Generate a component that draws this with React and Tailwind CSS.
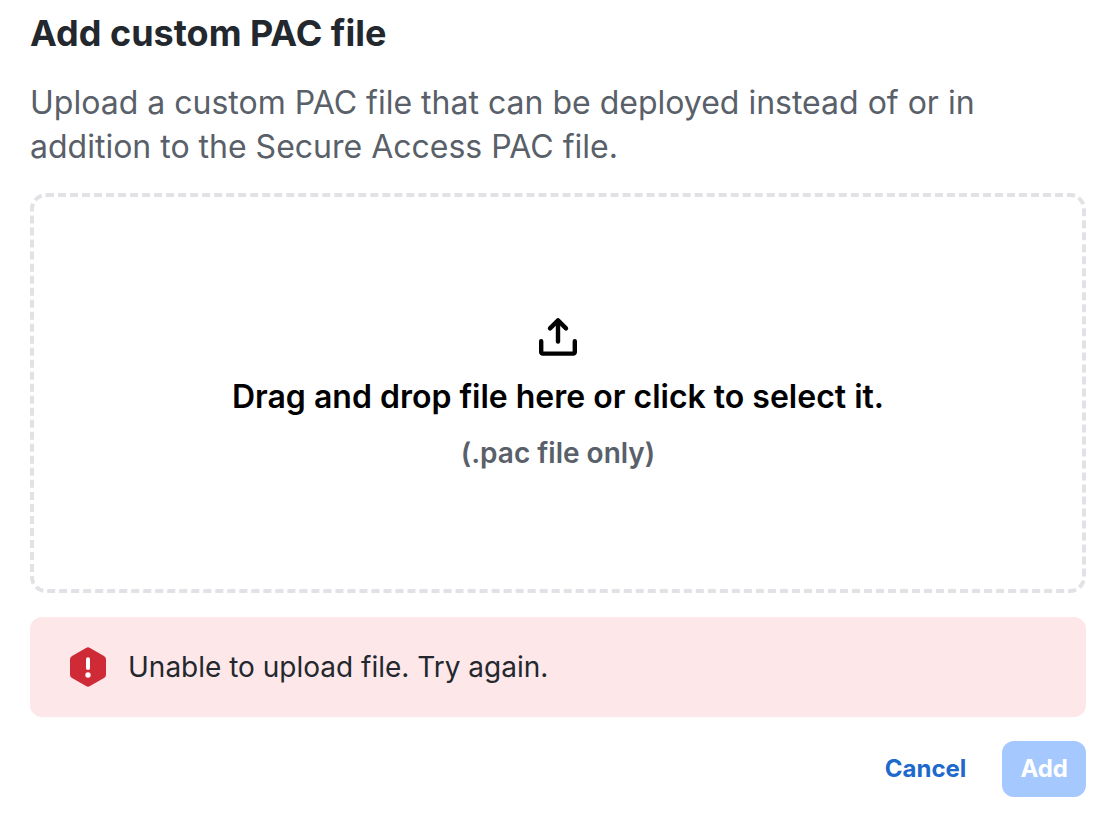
const fileInputId = "pac-file";

function UploadIcon() {
  return (
    <svg
      className="w-10 h-10"
      viewBox="0 0 40 40"
      fill="none"
      stroke="currentColor"
      strokeWidth="4.4"
      strokeLinecap="round"
      strokeLinejoin="round"
      aria-hidden="true"
    >
      <path d="M20 24.6V4" />
      <path d="M12 11.4L20 3.4L28 11.4" />
      <path d="M3.2 24.2V35a1.6 1.6 0 0 0 1.6 1.6H35.2a1.6 1.6 0 0 0 1.6-1.6V24.2" />
    </svg>
  );
}

function ErrorIcon() {
  return (
    <svg className="w-9 h-10 shrink-0" viewBox="0 0 36 40" aria-hidden="true">
      <path
        d="M16 0.9a4 4 0 0 1 4 0L34 8.9a4 4 0 0 1 2 3.5V27.6a4 4 0 0 1-2 3.5L20 39.1a4 4 0 0 1-4 0L2 31.1a4 4 0 0 1-2-3.5V12.4a4 4 0 0 1 2-3.5Z"
        fill="#ce2b37"
      />
      <path d="M18 12.2V21" stroke="#fff" strokeWidth="4" strokeLinecap="round" />
      <circle cx="18" cy="28" r="2.7" fill="#fff" />
    </svg>
  );
}

export default function App() {
  return (
    <main className="bg-white pt-[9px] pr-[26px] pb-5 pl-[30px] font-['Inter',sans-serif]">
      <h1 className="text-[36px] leading-[48px] font-bold text-[#23282e]">
        Add custom PAC file
      </h1>
      <p className="mt-6 text-[32px] leading-[44px] text-[#596069]">
        Upload a custom PAC file that can be deployed instead of or in addition
        to the Secure Access PAC file.
      </p>

      {/* Drop zone */}
      <label
        htmlFor={fileInputId}
        className="mt-6 flex h-[400px] flex-col items-center justify-center rounded-2xl border-4 border-dashed border-[#e1e2e6] pt-1 text-black cursor-pointer"
      >
        <UploadIcon />
        <span className="mt-4 text-[32px] leading-[48px] font-semibold">
          Drag and drop file here or click to select it.
        </span>
        <span className="mt-3 text-[28px] leading-[40px] font-semibold text-[#596069]">
          (.pac file only)
        </span>
        <input id={fileInputId} type="file" accept=".pac" className="sr-only" />
      </label>

      {/* Upload error */}
      <div
        role="alert"
        className="mt-6 flex items-center gap-[22px] rounded-xl bg-[#fee7e9] px-10 py-[30px]"
      >
        <ErrorIcon />
        <p className="text-[28px] leading-[40px] text-[#23282e]">
          Unable to upload file. Try again.
        </p>
      </div>

      <div className="mt-6 flex items-center justify-end gap-[18px]">
        <button
          type="button"
          className="h-14 rounded-xl px-[18px] text-[24px] leading-8 font-bold text-[#1d69cc]"
        >
          Cancel
        </button>
        <button
          type="button"
          disabled
          className="h-14 rounded-xl bg-[#a5c8ff] px-[18px] text-[24px] leading-8 font-bold text-white"
        >
          Add
        </button>
      </div>
    </main>
  );
}
